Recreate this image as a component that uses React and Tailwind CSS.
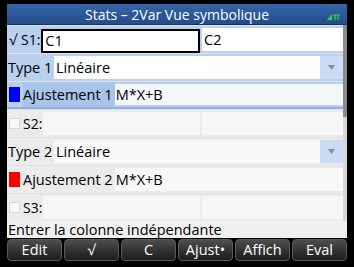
import React from "react";

const font = { fontFamily: "'Open Sans', 'DejaVu Sans', sans-serif" };

const Arrow = () => (
  <div className="w-[23px] bg-[#c9dcf4] flex items-center justify-center">
    <svg width="7" height="5" viewBox="0 0 7 5">
      <path d="M0 0 L7 0 L3.5 5 Z" fill="#7f8fa6" />
    </svg>
  </div>
);

const Check = () => (
  <div className="w-[11px] h-[11px] shrink-0 bg-[#f8f8f8] border border-[#d6d6d6] mr-[3px]" />
);

const SeriesRow = ({ active, checked, name, c1, c2 }) => (
  <div className={"flex h-[27px] items-stretch " + (active ? "bg-[#b9d0ee]" : "bg-[#ebebeb]")}>
    <div className="min-w-[31px] flex items-center pl-[2px] pr-[1px] shrink-0 whitespace-nowrap">
      {checked ? (
        <span className="text-[14.5px] text-black mr-[4px]">√</span>
      ) : (
        <Check />
      )}
      <span className="text-[14px] text-black">{name}</span>
    </div>
    {active ? (
      <div className="flex-1 mt-[3px] border-2 border-black bg-white flex items-center pl-[2px] text-[14.5px]">
        {c1}
      </div>
    ) : (
      <div className="flex-1 my-[2px] bg-[#f6f6f6] flex items-center pl-[2px] text-[14.5px]">
        {c1}
      </div>
    )}
    <div className={"w-[141px] ml-[2px] my-[2px] flex items-center pl-[2px] text-[14.5px] " + (active ? "bg-white" : "bg-[#f6f6f6]")}>
      {c2}
    </div>
  </div>
);

const TypeRow = ({ active, n }) => (
  <div className={"flex h-[27px] items-stretch " + (active ? "bg-[#b9d0ee]" : "bg-[#ebebeb]")}>
    <div className="w-[47px] flex items-center text-[14.5px] pl-[1px] shrink-0">Type {n}</div>
    <div className="flex-1 my-[2px] flex items-stretch">
      <div className={"flex-1 flex items-center pl-[2px] text-[14.5px] " + (active ? "bg-white" : "bg-[#f8f8f8]")}>Linéaire</div>
      <Arrow />
    </div>
  </div>
);

const FitRow = ({ active, n, color }) => (
  <div className={"flex h-[27px] items-stretch " + (active ? "bg-[#b9d0ee] border-b-2 border-[#8fb0e0]" : "bg-[#ebebeb]")}>
    <div className="flex items-center pl-[2px] shrink-0">
      <div className="w-[11px] h-[15px] mr-[3px]" style={{ background: color }} />
    </div>
    <div className={"flex items-center text-[14.5px] pr-[2px] " + (active ? "bg-[#a9c4ea]" : "")}>
      Ajustement {n}
    </div>
    <div className={"flex-1 my-[2px] flex items-center text-[14.5px] pl-[1px] " + (active ? "bg-[#f3f6fb]" : "bg-[#f8f8f8]")}>
      M*X+B
    </div>
  </div>
);

const Btn = ({ children }) => (
  <div className="flex-1 h-full rounded-[4px] bg-gradient-to-b from-[#4e4e4e] to-[#1c1c1c] border border-[#5a5a5a] flex items-center justify-center text-white text-[14.5px]">
    {children}
  </div>
);

export default function App() {
  return (
    <div className="w-[354px] h-[267px] bg-black pt-[4px] pl-[7px] pr-[7px] pb-[6px] overflow-hidden" style={font}>
      <div className="flex flex-col h-full">
        {/* title bar */}
        <div className="relative h-[21px] bg-gradient-to-b from-[#3565a8] to-[#234d8c] border-b border-[#16335f] flex items-center justify-center text-white text-[14px]">
          Stats – 2Var Vue symbolique
          <svg className="absolute right-[6px] bottom-[3px]" width="14" height="8" viewBox="0 0 14 8">
            <path d="M0 7 L5 1 L5 7 Z" fill="#3fcf3f" />
            <path d="M6 2 H13 M8 2 V7 M11 2 V7" stroke="#3fcf3f" strokeWidth="1.2" fill="none" />
          </svg>
        </div>
        {/* list */}
        <div className="flex">
          <div className="flex-1 flex flex-col pt-[1px] gap-[1px] bg-[#e2e2e2]">
            <SeriesRow active checked name="S1:" c1="C1" c2="C2" />
            <TypeRow active n={1} />
            <FitRow active n={1} color="#0000ff" />
            <SeriesRow name="S2:" c1="" c2="" />
            <TypeRow n={2} />
            <FitRow n={2} color="#ff0000" />
            <SeriesRow name="S3:" c1="" c2="" />
          </div>
          <div className="w-[4px] bg-[#d8d8d8] flex flex-col">
            <div className="h-[92px] bg-[#8a8a8a]" />
          </div>
        </div>
        {/* status */}
        <div className="flex-1 bg-[#f0f0f0] flex items-end text-[14.5px] leading-[17px] pl-[1px]">
          Entrer la colonne indépendante
        </div>
        {/* buttons */}
        <div className="h-[23px] flex gap-[2px] bg-black pt-[1px]">
          <Btn>Edit</Btn>
          <Btn>√</Btn>
          <Btn>C</Btn>
          <Btn>Ajust•</Btn>
          <Btn>Affich</Btn>
          <Btn>Eval</Btn>
        </div>
      </div>
    </div>
  );
}
